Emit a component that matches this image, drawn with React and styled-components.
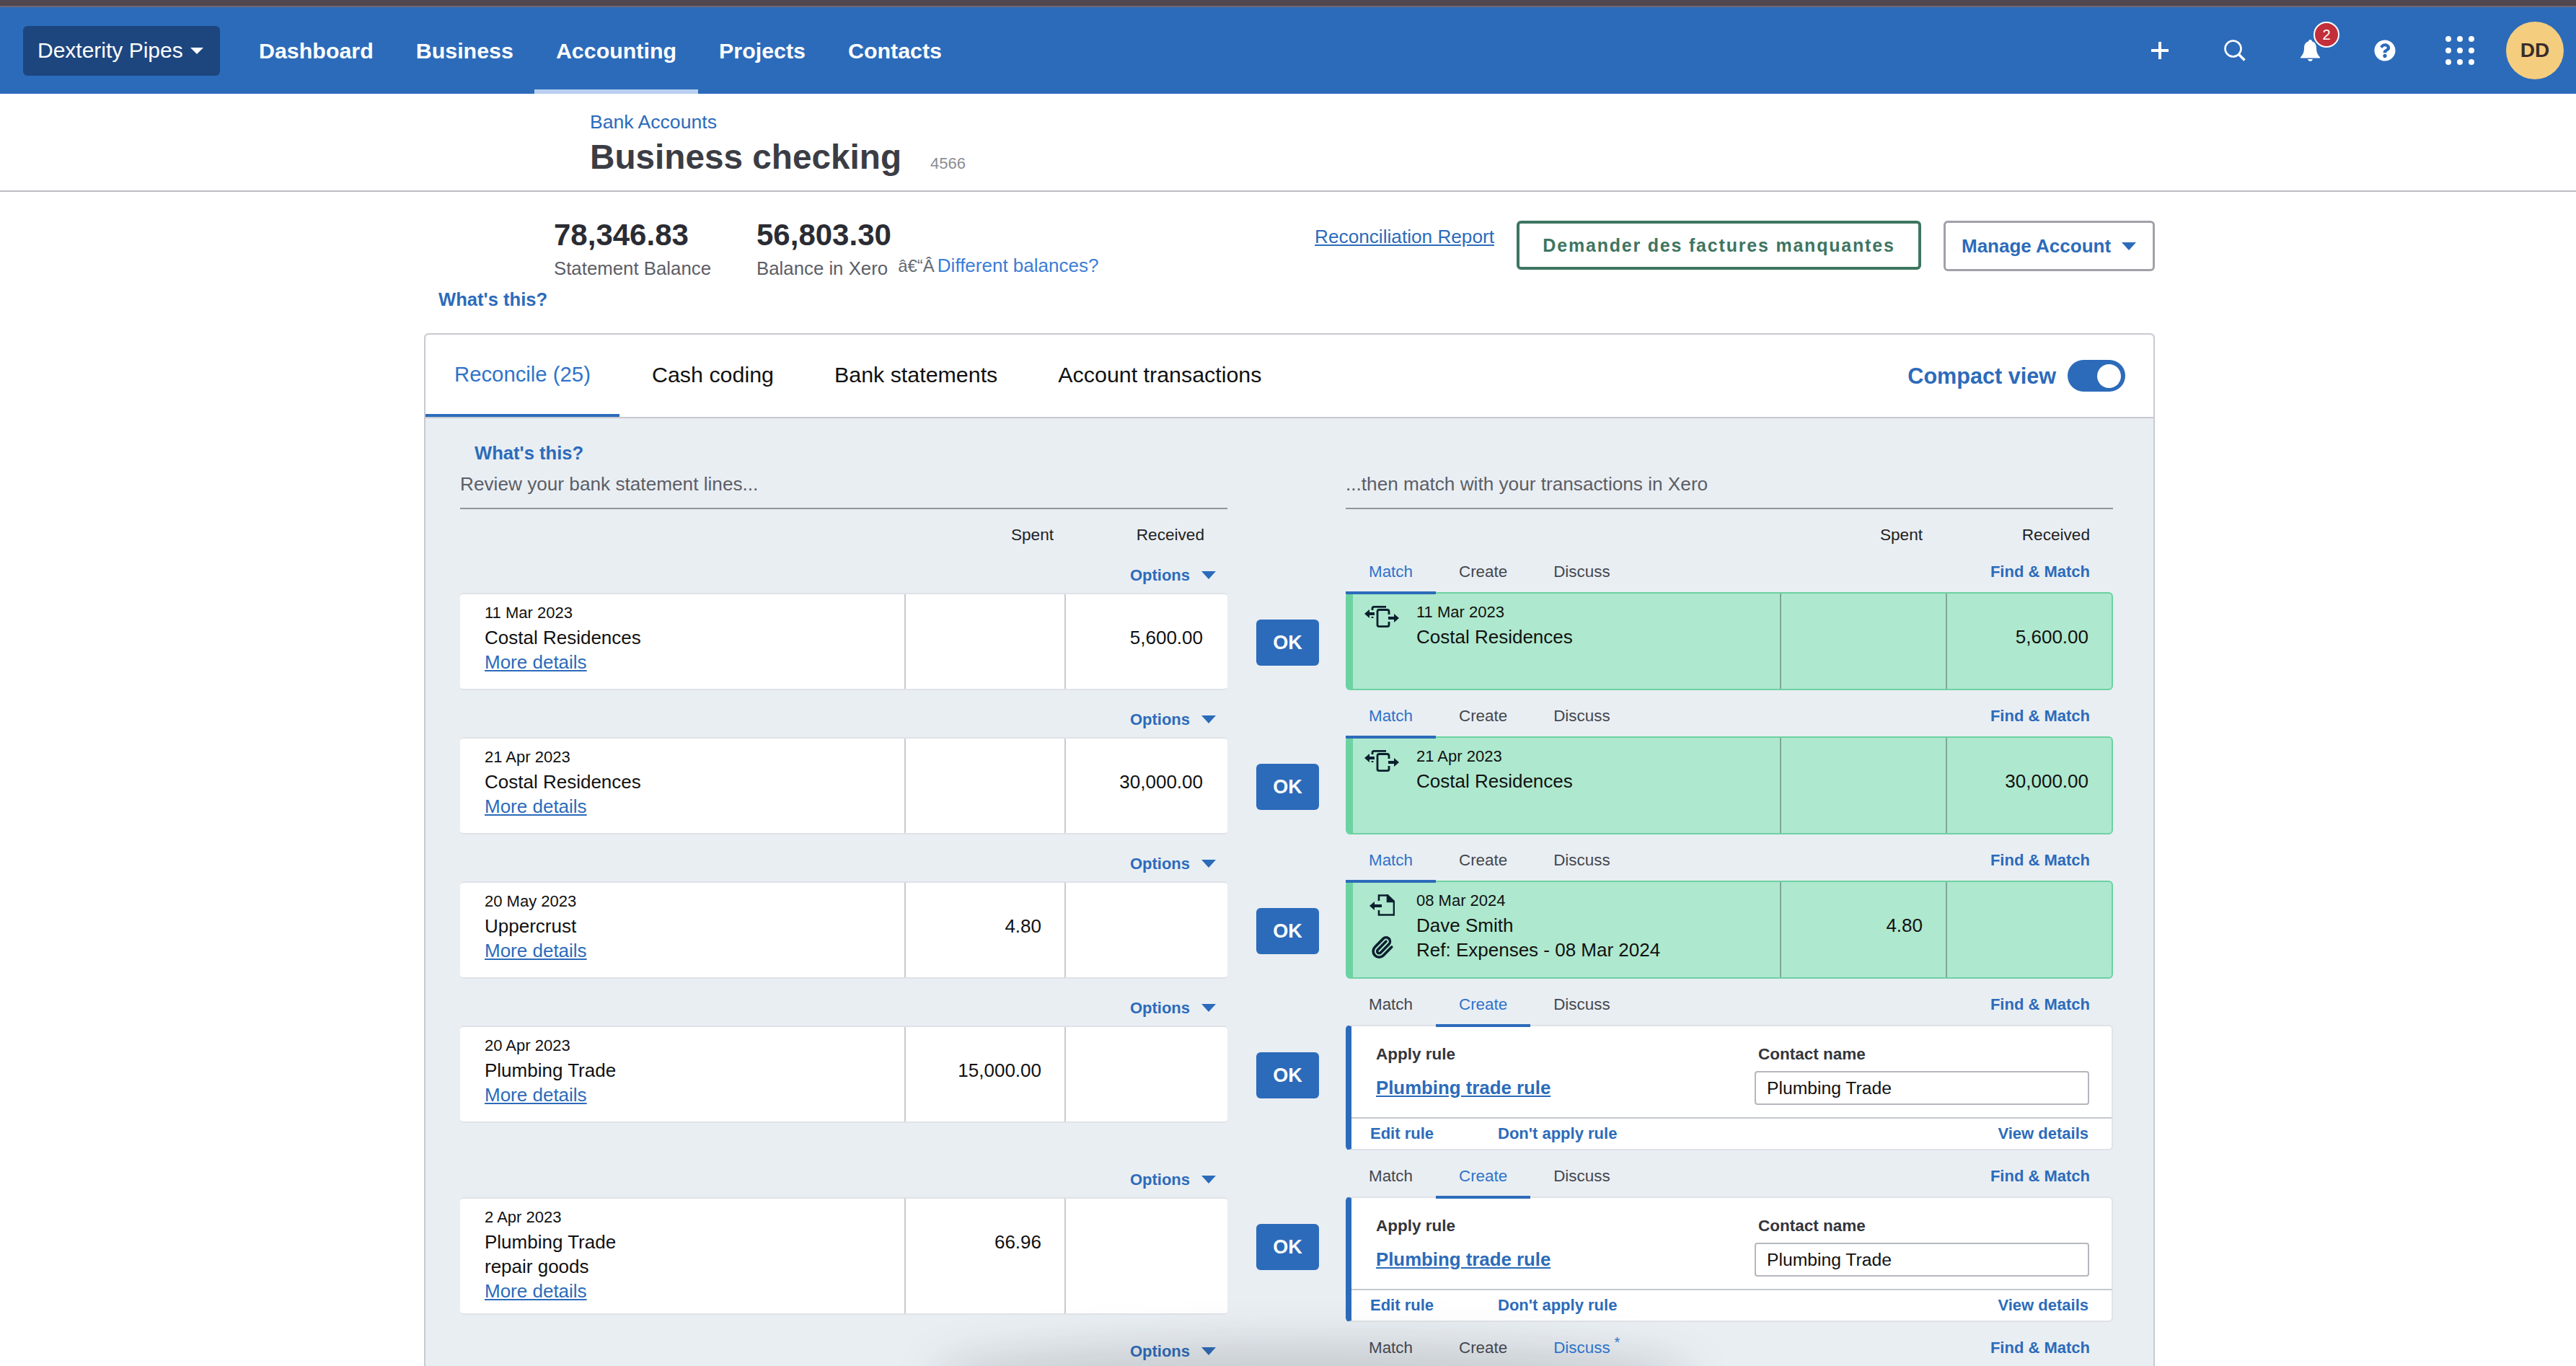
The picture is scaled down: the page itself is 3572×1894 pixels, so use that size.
import React from "react";
import styled, { createGlobalStyle } from "styled-components";
import { Paperclip } from "lucide-react";
import { FaQuestionCircle } from "react-icons/fa";

const BLUE = "#2c6bba";
const LINK = "#2f73c9";

const GlobalStyle = createGlobalStyle`
  html, body {
    margin: 0;
    height: 100%;
    overflow: hidden;
    background: #fff;
    font-family: "Liberation Sans", Arial, sans-serif;
    color: #000;
  }
  #root { height: 100%; }
`;

const Page = styled.div`
  position: relative;
  width: 3572px;
  height: 1894px;
  overflow: hidden;
`;

const TopStrip = styled.div`
  height: 8px;
  background: #52474f;
  border-bottom: 2px solid #6f6a78;
`;

const NavBar = styled.nav`
  display: flex;
  align-items: stretch;
  height: 120px;
  padding: 0 17px 0 32px;
  background: ${BLUE};
`;

const OrgButton = styled.div`
  align-self: center;
  display: flex;
  align-items: center;
  gap: 10px;
  box-sizing: border-box;
  width: 273px;
  height: 69px;
  margin-right: 24.5px;
  padding-left: 20px;
  background: #1d467f;
  border-radius: 6px;
  color: #fff;
  font-size: 30px;
`;

const Caret = styled.span`
  display: inline-block;
  width: 0;
  height: 0;
  border-left: ${(p) => p.$size}px solid transparent;
  border-right: ${(p) => p.$size}px solid transparent;
  border-top: ${(p) => p.$size * 1.1}px solid ${(p) => p.$color};
`;

const NavLink = styled.a`
  display: flex;
  align-items: center;
  padding: 0 29.5px;
  color: #fff;
  font-size: 30.4px;
  font-weight: 700;
  box-shadow: ${(p) => (p.$active ? "inset 0 -6px 0 #b9d0f0" : "none")};
`;

const NavRight = styled.div`
  display: flex;
  align-items: center;
  margin-left: auto;
`;

const IconSlot = styled.div`
  position: relative;
  display: flex;
  align-items: center;
  justify-content: center;
  width: 104px;
  height: 40px;
  color: #fff;
`;

const Badge = styled.span`
  position: absolute;
  top: -20px;
  left: 57px;
  display: flex;
  align-items: center;
  justify-content: center;
  box-sizing: border-box;
  width: 36px;
  height: 36px;
  background: #c22f3a;
  border: 2px solid #fff;
  border-radius: 50%;
  color: #fff;
  font-size: 20px;
`;

const Avatar = styled.div`
  display: flex;
  align-items: center;
  justify-content: center;
  width: 80px;
  height: 80px;
  margin-left: 12px;
  background: #f5cd7f;
  border-radius: 50%;
  color: #3a2e2a;
  font-size: 28px;
  font-weight: 700;
`;

const TitleBand = styled.header`
  box-sizing: border-box;
  height: 136px;
  padding: 25px 0 0 818px;
  border-bottom: 2px solid #bcbdc2;
`;

const Crumb = styled.a`
  display: block;
  color: ${BLUE};
  font-size: 26.6px;
  line-height: 28px;
`;

const TitleRow = styled.div`
  display: flex;
  align-items: baseline;
  gap: 40px;
  margin-top: 7px;
`;

const Title = styled.h1`
  margin: 0;
  color: #3b3d45;
  font-size: 47.7px;
  font-weight: 700;
  line-height: 56px;
`;

const AccountNo = styled.span`
  color: #8b8d93;
  font-size: 22px;
`;

const Summary = styled.section`
  display: flex;
  justify-content: space-between;
  box-sizing: border-box;
  width: 2400px;
  height: 196px;
  margin-left: 588px;
  padding-top: 36px;
`;

const SummaryLeft = styled.div`
  display: flex;
  flex-direction: column;
`;

const Stats = styled.div`
  display: flex;
  padding-left: 180px;
`;

const Stat = styled.div`
  width: ${(p) => p.$width}px;
`;

const StatValue = styled.div`
  color: #2a2c33;
  font-size: 42px;
  font-weight: 700;
  line-height: 48px;
`;

const StatLabelRow = styled.div`
  display: flex;
  align-items: center;
  gap: 14px;
  margin-top: 7px;
  height: 30px;
`;

const StatLabel = styled.span`
  color: #5c5e66;
  font-size: 25.8px;
`;

const Mojibake = styled.span`
  position: relative;
  top: -4px;
  color: #666a72;
  font-size: 24px;
  white-space: nowrap;
`;

const BalanceLink = styled.a`
  margin-left: 4px;
  color: #3b7dd8;
  font-size: 26px;
`;

const WhatsThis = styled.a`
  display: block;
  margin: ${(p) => p.$margin};
  color: ${BLUE};
  font-size: 25.6px;
  font-weight: 700;
  line-height: 30px;
`;

const Actions = styled.div`
  display: flex;
  align-items: flex-start;
  padding-top: 4px;
`;

const ReportLink = styled.a`
  margin: 7px 31px 0 0;
  color: ${BLUE};
  font-size: 26.2px;
  line-height: 30px;
  text-decoration: underline;
`;

const RequestButton = styled.button`
  box-sizing: border-box;
  width: 561px;
  height: 68px;
  margin-right: 31px;
  padding: 0;
  background: #fff;
  border: 4px solid #3e7561;
  border-radius: 6px;
  color: #3e7561;
  font: 700 25px "Liberation Sans", Arial, sans-serif;
  letter-spacing: 1.8px;
`;

const ManageButton = styled.button`
  display: flex;
  align-items: center;
  gap: 15px;
  box-sizing: border-box;
  width: 293px;
  height: 70px;
  padding: 0 0 0 22px;
  background: #fff;
  border: 3px solid #a0a1a9;
  border-radius: 6px;
  color: ${BLUE};
  font: 700 26px "Liberation Sans", Arial, sans-serif;
`;

const Card = styled.main`
  box-sizing: border-box;
  width: 2400px;
  height: 1500px;
  margin-left: 588px;
  background: #e9eef3;
  border: 2px solid #c8cad0;
  border-radius: 6px;
`;

const TabBar = styled.div`
  display: flex;
  align-items: stretch;
  height: 114px;
  background: #fff;
  border-bottom: 2px solid #c8cad0;
  border-radius: 6px 6px 0 0;
`;

const MainTab = styled.a`
  display: flex;
  align-items: center;
  padding: 0 42px 4px;
  color: ${(p) => (p.$active ? LINK : "#111")};
  font-size: 30.4px;
  box-shadow: ${(p) => (p.$active ? `inset 0 -4px 0 ${BLUE}` : "none")};
  &:first-child {
    box-sizing: border-box;
    width: 269px;
    margin-right: 3px;
    padding: 0 0 4px 40px;
    font-size: 29.3px;
  }
`;

const CompactToggle = styled.div`
  display: flex;
  align-items: center;
  gap: 16px;
  margin-left: auto;
  padding-right: 39px;
  color: ${BLUE};
  font-size: 30.6px;
  font-weight: 700;
`;

const Switch = styled.span`
  display: flex;
  align-items: center;
  justify-content: flex-end;
  box-sizing: border-box;
  width: 80px;
  height: 44px;
  padding-right: 6px;
  background: ${BLUE};
  border-radius: 22px;
  &::after {
    content: "";
    width: 33px;
    height: 33px;
    background: #fff;
    border-radius: 50%;
  }
`;

const Body = styled.div`
  padding: 33px 0 0 48px;
`;

const ThreeCols = styled.div`
  display: grid;
  grid-template-columns: 1064px 164px 1064px;
`;

const Lead = styled.div`
  display: flex;
  flex-direction: column;
  justify-content: flex-end;
  box-sizing: border-box;
  height: 93px;
  padding-bottom: 18px;
  border-bottom: 2px solid #90949c;
  color: #5c5e66;
  font-size: 26.2px;
  line-height: 30px;
`;

const AmountHead = styled.div`
  display: flex;
  justify-content: flex-end;
  padding-top: 21px;
  height: 37px;
  font-size: 22.6px;
  line-height: 30px;
  color: #222;
`;

const HeadCell = styled.span`
  box-sizing: border-box;
  width: ${(p) => p.$width}px;
  padding-right: ${(p) => p.$pad}px;
  text-align: right;
`;

const Row = styled.div`
  display: grid;
  grid-template-columns: 1064px 164px 1064px;
  align-items: start;
  padding-bottom: 7px;
`;

const OptionsBar = styled.div`
  display: flex;
  align-items: center;
  justify-content: flex-end;
  gap: 16px;
  box-sizing: border-box;
  height: 58px;
  padding: 9px 16px 0 0;
  line-height: 26px;
  color: ${BLUE};
  font-size: 22px;
  font-weight: 700;
`;

const StatementCard = styled.div`
  display: grid;
  grid-template-columns: 616px 222px 1fr;
  box-sizing: border-box;
  min-height: 135px;
  background: #fff;
  border-top: 2px solid #dfe2e7;
  border-bottom: 2px solid #dfe2e7;
  border-radius: 5px;
`;

const Details = styled.div`
  padding: 9px 0 14px 34px;
`;

const DateLine = styled.div`
  color: #111;
  font-size: 22px;
  line-height: 34px;
`;

const NameLine = styled.div`
  color: #111;
  font-size: 26px;
  line-height: 34px;
`;

const MoreLink = styled.a`
  display: block;
  color: ${BLUE};
  font-size: 26px;
  line-height: 34px;
  text-decoration: underline;
`;

const AmountCell = styled.div`
  box-sizing: border-box;
  padding: 43px ${(p) => p.$pad || 32}px 0 0;
  border-left: 2px solid ${(p) => (p.$green ? "#7fa898" : "#c8cad0")};
  color: #111;
  font-size: 26px;
  line-height: 34px;
  text-align: right;
`;

const OkButton = styled.button`
  width: 87px;
  height: 64px;
  margin: 95px 0 0 40px;
  padding: 0;
  background: ${BLUE};
  border: 0;
  border-radius: 6px;
  color: #fff;
  font: 700 27px "Liberation Sans", Arial, sans-serif;
`;

const TabStrip = styled.div`
  display: flex;
  align-items: flex-start;
  height: 57px;
`;

const SubTab = styled.a`
  position: relative;
  z-index: 1;
  box-sizing: border-box;
  height: 60px;
  padding: 16px 32px 0;
  border-bottom: 4px solid ${(p) => (p.$underline ? BLUE : "transparent")};
  color: ${(p) => (p.$current ? LINK : "#44474f")};
  font-size: 22.4px;
  line-height: 26px;
`;

const Star = styled.sup`
  font-size: 20px;
  line-height: 0;
  margin-left: 6px;
`;

const FindMatch = styled.a`
  margin-left: auto;
  padding: 16px 32px 0 0;
  color: ${BLUE};
  font-size: 22px;
  font-weight: 700;
  line-height: 26px;
`;

const MatchCard = styled.div`
  display: grid;
  grid-template-columns: 592px 230px 1fr;
  box-sizing: border-box;
  min-height: 136px;
  background: #aee8ce;
  border: 2px solid #6dd2a2;
  border-left-width: 10px;
  border-radius: 6px;
`;

const MatchInfo = styled.div`
  display: grid;
  grid-template-columns: 88px 1fr;
  padding-top: 9px;
`;

const IconCol = styled.div`
  display: flex;
  flex-direction: column;
  align-items: center;
  padding: 8px 8px 0 0;
  box-sizing: border-box;
  color: #0b1f2e;
`;

const ClipWrap = styled.span`
  display: flex;
  margin-top: 27px;
`;

const RuleCard = styled.div`
  box-sizing: border-box;
  background: #fff;
  border: 2px solid #dfe2e7;
  border-left: 8px solid ${BLUE};
  border-radius: 6px;
`;

const RuleBody = styled.div`
  display: grid;
  grid-template-columns: 559px 464px;
  grid-template-rows: 26px 47px;
  row-gap: 10px;
  padding: 26px 0 17px;
  border-bottom: 2px solid #c5c8ce;
`;

const FieldLabel = styled.div`
  padding-left: ${(p) => p.$pad}px;
  color: #33353c;
  font-size: 22.5px;
  font-weight: 700;
  line-height: 26px;
`;

const RuleLink = styled.a`
  align-self: center;
  padding-left: 34px;
  color: ${BLUE};
  font-size: 25.8px;
  font-weight: 700;
  text-decoration: underline;
`;

const ContactInput = styled.div`
  display: flex;
  align-items: center;
  box-sizing: border-box;
  padding-left: 15px;
  background: #fff;
  border: 2px solid #b5b7be;
  border-radius: 4px;
  color: #111;
  font-size: 24.7px;
`;

const RuleFooter = styled.div`
  display: flex;
  align-items: center;
  gap: 89px;
  height: 42px;
  padding: 0 32px 0 26px;
`;

const RuleAction = styled.a`
  color: ${BLUE};
  font-size: 22px;
  font-weight: 700;
  &:last-child {
    margin-left: auto;
  }
`;

const DockShadow = styled.div`
  position: absolute;
  left: 1290px;
  bottom: -62px;
  width: 1060px;
  height: 96px;
  background: rgba(40, 45, 50, 0.17);
  border-radius: 50%;
  filter: blur(28px);
  pointer-events: none;
`;

const SwapIcon = () => (
  <svg width="48" height="30" viewBox="0 0 48 30" fill="none" stroke="currentColor" strokeWidth="2.8">
    <path d="M11 6V3.5Q11 1.4 13.5 1.4H30" />
    <path d="M11 15v3" strokeDasharray="2 2" />
    <path d="M34 12V8Q34 5.5 31.5 5.5H20.5Q18 5.5 18 8V26.5Q18 28.6 20.5 28.6H31.5Q34 28.6 34 26.5V22" />
    <path d="M0 11L7 5V9H14V13H7V17Z" fill="currentColor" stroke="none" />
    <path d="M48 17L41 11V15H33V19H41V23Z" fill="currentColor" stroke="none" />
  </svg>
);

const DocIcon = () => (
  <svg width="35" height="30" viewBox="0 0 35 30" fill="none" stroke="currentColor" strokeWidth="2.6">
    <path d="M13 9V1.5H25L34 10V28.5H13V22" />
    <path d="M25 1.5L34 10H25Z" fill="currentColor" />
    <path d="M0 16L7 10V14H17V18H7V22Z" fill="currentColor" stroke="none" />
  </svg>
);

const PlusIcon = () => (
  <svg width="24" height="24" viewBox="0 0 24 24" stroke="#fff" strokeWidth="4">
    <path d="M12 0V24M0 12H24" />
  </svg>
);

const SearchIcon = () => (
  <svg width="30" height="30" viewBox="0 0 30 30" fill="none" stroke="#fff">
    <circle cx="12.5" cy="12.5" r="11" strokeWidth="2.6" />
    <path d="M20.5 20.5L28.5 28.5" strokeWidth="3.6" />
  </svg>
);

const BellIcon = () => (
  <svg width="27" height="30" viewBox="0 0 27 30" fill="#fff">
    <path d="M13.5 0C15 0 16 1 16 2.6C20.5 3.8 22 7.6 22 12C22 17 23.5 20.5 27 24.5V25.5H0V24.5C3.5 20.5 5 17 5 12C5 7.6 6.5 3.8 11 2.6C11 1 12 0 13.5 0Z" />
    <path d="M10 27H17C16.5 29 15 30 13.5 30C12 30 10.5 29 10 27Z" />
  </svg>
);

const GridIcon = () => (
  <svg width="40" height="40" viewBox="0 0 40 40" fill="#fff">
    {[4, 20, 36].map((cy) =>
      [4, 20, 36].map((cx) => <circle key={`${cx}-${cy}`} cx={cx} cy={cy} r="4" />)
    )}
  </svg>
);

const rows = [
  {
    date: "11 Mar 2023",
    name: "Costal Residences",
    received: "5,600.00",
    match: { icon: "swap", date: "11 Mar 2023", lines: ["Costal Residences"], received: "5,600.00" }
  },
  {
    date: "21 Apr 2023",
    name: "Costal Residences",
    received: "30,000.00",
    match: { icon: "swap", date: "21 Apr 2023", lines: ["Costal Residences"], received: "30,000.00" }
  },
  {
    date: "20 May 2023",
    name: "Uppercrust",
    spent: "4.80",
    match: {
      icon: "doc",
      clip: true,
      date: "08 Mar 2024",
      lines: ["Dave Smith", "Ref: Expenses - 08 Mar 2024"],
      spent: "4.80"
    }
  },
  { date: "20 Apr 2023", name: "Plumbing Trade", spent: "15,000.00", rule: true },
  { date: "2 Apr 2023", name: "Plumbing Trade", note: "repair goods", spent: "66.96", rule: true }
];

const SubTabs = ({ current, underline = current, star }) => (
  <TabStrip>
    {["Match", "Create", "Discuss"].map((label) => (
      <SubTab key={label} $current={label === current} $underline={label === underline}>
        {label}
        {star && label === current && <Star>*</Star>}
      </SubTab>
    ))}
    <FindMatch>Find &amp; Match</FindMatch>
  </TabStrip>
);

const OptionsLine = () => (
  <OptionsBar>
    Options
    <Caret $size={10} $color={BLUE} />
  </OptionsBar>
);

const Match = ({ data }) => (
  <MatchCard>
    <MatchInfo>
      <IconCol>
        {data.icon === "swap" ? <SwapIcon /> : <DocIcon />}
        {data.clip && (
          <ClipWrap>
            <Paperclip size={33} strokeWidth={2.6} />
          </ClipWrap>
        )}
      </IconCol>
      <div>
        <DateLine>{data.date}</DateLine>
        {data.lines.map((line) => (
          <NameLine key={line}>{line}</NameLine>
        ))}
      </div>
    </MatchInfo>
    <AmountCell $green>{data.spent}</AmountCell>
    <AmountCell $green>{data.received}</AmountCell>
  </MatchCard>
);

const Rule = () => (
  <RuleCard>
    <RuleBody>
      <FieldLabel $pad={34}>Apply rule</FieldLabel>
      <FieldLabel $pad={5}>Contact name</FieldLabel>
      <RuleLink>Plumbing trade rule</RuleLink>
      <ContactInput>Plumbing Trade</ContactInput>
    </RuleBody>
    <RuleFooter>
      <RuleAction>Edit rule</RuleAction>
      <RuleAction>Don't apply rule</RuleAction>
      <RuleAction>View details</RuleAction>
    </RuleFooter>
  </RuleCard>
);

const App = () => (
  <Page>
    <GlobalStyle />
    <TopStrip />
    <NavBar>
      <OrgButton>
        Dexterity Pipes
        <Caret $size={9} $color="#fff" />
      </OrgButton>
      <NavLink>Dashboard</NavLink>
      <NavLink>Business</NavLink>
      <NavLink $active>Accounting</NavLink>
      <NavLink>Projects</NavLink>
      <NavLink>Contacts</NavLink>
      <NavRight>
        <IconSlot>
          <PlusIcon />
        </IconSlot>
        <IconSlot>
          <SearchIcon />
        </IconSlot>
        <IconSlot>
          <BellIcon />
          <Badge>2</Badge>
        </IconSlot>
        <IconSlot>
          <FaQuestionCircle size={30} />
        </IconSlot>
        <IconSlot>
          <GridIcon />
        </IconSlot>
        <Avatar>DD</Avatar>
      </NavRight>
    </NavBar>

    <TitleBand>
      <Crumb>Bank Accounts</Crumb>
      <TitleRow>
        <Title>Business checking</Title>
        <AccountNo>4566</AccountNo>
      </TitleRow>
    </TitleBand>

    <Summary>
      <SummaryLeft>
        <Stats>
          <Stat $width={281}>
            <StatValue>78,346.83</StatValue>
            <StatLabelRow>
              <StatLabel>Statement Balance</StatLabel>
            </StatLabelRow>
          </Stat>
          <Stat>
            <StatValue>56,803.30</StatValue>
            <StatLabelRow>
              <StatLabel>Balance in Xero</StatLabel>
              <Mojibake>
                {"â€\u201cÂ"}
                <BalanceLink>Different balances?</BalanceLink>
              </Mojibake>
            </StatLabelRow>
          </Stat>
        </Stats>
        <WhatsThis $margin="13px 0 0 20px">What's this?</WhatsThis>
      </SummaryLeft>
      <Actions>
        <ReportLink>Reconciliation Report</ReportLink>
        <RequestButton>Demander des factures manquantes</RequestButton>
        <ManageButton>
          Manage Account
          <Caret $size={10} $color={BLUE} />
        </ManageButton>
      </Actions>
    </Summary>

    <Card>
      <TabBar>
        <MainTab $active>Reconcile (25)</MainTab>
        <MainTab>Cash coding</MainTab>
        <MainTab>Bank statements</MainTab>
        <MainTab>Account transactions</MainTab>
        <CompactToggle>
          Compact view
          <Switch />
        </CompactToggle>
      </TabBar>
      <Body>
        <ThreeCols>
          <Lead>
            <WhatsThis $margin="0 0 13px 20px">What's this?</WhatsThis>
            Review your bank statement lines...
          </Lead>
          <span />
          <Lead>...then match with your transactions in Xero</Lead>
          <AmountHead>
            <HeadCell $width={222} $pad={17}>Spent</HeadCell>
            <HeadCell $width={224} $pad={32}>Received</HeadCell>
          </AmountHead>
          <span />
          <AmountHead>
            <HeadCell $width={230} $pad={33}>Spent</HeadCell>
            <HeadCell $width={231} $pad={32}>Received</HeadCell>
          </AmountHead>
        </ThreeCols>

        {rows.map((row) => (
          <Row key={row.date}>
            <div>
              <OptionsLine />
              <StatementCard>
                <Details>
                  <DateLine>{row.date}</DateLine>
                  <NameLine>{row.name}</NameLine>
                  {row.note && <NameLine>{row.note}</NameLine>}
                  <MoreLink>More details</MoreLink>
                </Details>
                <AmountCell>{row.spent}</AmountCell>
                <AmountCell $pad={34}>{row.received}</AmountCell>
              </StatementCard>
            </div>
            <OkButton>OK</OkButton>
            <div>
              <SubTabs current={row.rule ? "Create" : "Match"} />
              {row.rule ? <Rule /> : <Match data={row.match} />}
            </div>
          </Row>
        ))}

        <Row>
          <OptionsLine />
          <span />
          <SubTabs current="Discuss" underline="none" star />
        </Row>
      </Body>
    </Card>
    <DockShadow />
  </Page>
);

export default App;
